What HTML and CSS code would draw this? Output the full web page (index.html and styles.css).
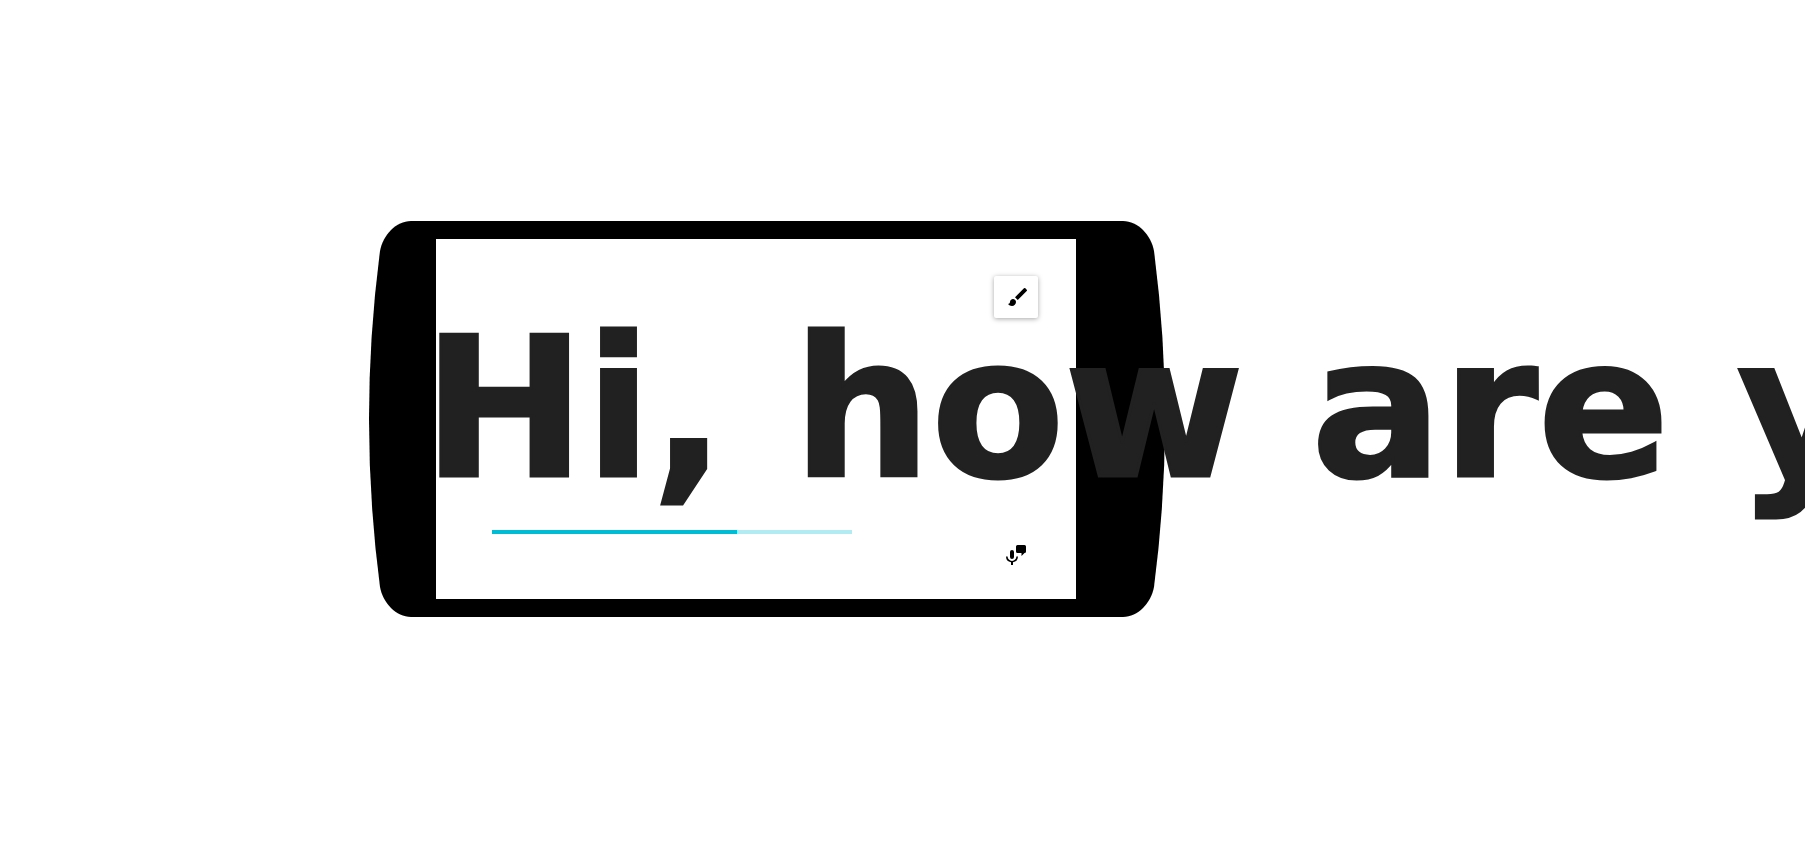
FILE: index.html
```html
<!DOCTYPE html>
<html lang="en">
<head>
<meta charset="utf-8">
<title>Phone preview</title>
<meta name="viewport" content="width=device-width, initial-scale=1">
<link rel="stylesheet" href="styles.css">
</head>
<body>
<main class="stage">
  <section class="phone">
    <svg class="shell" viewBox="0 0 796 396" preserveAspectRatio="none" aria-hidden="true">
      <path d="M42 0H754C769 0 782 14 785 30Q807 198 785 366C782 382 769 396 754 396H42C27 396 14 382 11 366Q-11 198 11 30C14 14 27 0 42 0Z"/>
    </svg>
    <div class="screen">
      <button class="tool tool-raised" type="button" aria-label="Style">
        <svg class="icon" viewBox="0 0 24 24" aria-hidden="true"><path d="M7 14c-1.660 0-3 1.340-3 3 0 1.310-1.160 2-2 2 .920 1.220 2.490 2 4 2 2.210 0 4-1.790 4-4 0-1.660-1.340-3-3-3zm13.710-9.370l-1.340-1.340a1 1 0 0 0-1.410 0L9 12.250 11.750 15l8.960-8.960a1 1 0 0 0 0-1.410z"/></svg>
      </button>
      <h1 class="message">Hi, how are you?</h1>
      <progress class="progress" value="245" max="360" aria-label="Progress"></progress>
      <button class="tool" type="button" aria-label="Speak">
        <svg class="icon" viewBox="0 0 24 24" aria-hidden="true"><path d="M8 7a2 2 0 0 1 2 2v5a2 2 0 0 1-4 0V9a2 2 0 0 1 2-2zM2 13.500h1.600a4.400 4.400 0 0 0 8.800 0H14a6 6 0 0 1-5 5.800V22H7v-2.700a6 6 0 0 1-5-5.800zM13.500 2h7A1.500 1.500 0 0 1 22 3.500v5a1.500 1.500 0 0 1-1.500 1.500L17.500 13v-3h-4A1.500 1.500 0 0 1 12 8.500v-5A1.500 1.500 0 0 1 13.500 2z"/></svg>
      </button>
    </div>
  </section>
</main>
</body>
</html>
```
FILE: styles.css
```css
body {
  margin: 0;
  overflow-x: hidden;
  background: #fff;
  color: #212121;
  font-family: "Arial Black", "DejaVu Sans", sans-serif;
}

.stage {
  padding: 221px 0 221px 369px;
}

.phone {
  position: relative;
  width: 640px;
  padding: 18px 89px 18px 67px;
}

.shell {
  position: absolute;
  inset: 0;
  width: 100%;
  height: 100%;
}

.screen {
  position: relative;
  display: grid;
  grid-template-columns: 360px 1fr;
  grid-template-rows: 79px 182px 76px;
  padding: 0 38px 23px 56px;
  background: #fff;
}

.tool {
  grid-column: 2;
  justify-self: end;
  align-self: end;
  display: grid;
  place-items: center;
  width: 44px;
  height: 42px;
  padding: 0;
  border: 0;
  border-radius: 2px;
  background: #fff;
  color: #000;
}

.tool-raised {
  padding-left: 4px;
  box-shadow: 0 1px 5px rgba(0, 0, 0, 0.35);
}

.icon {
  width: 24px;
  height: 24px;
  fill: currentColor;
}

.message {
  grid-column: 1 / -1;
  margin: 0 0 0 -69px;
  font-size: 194px;
  font-weight: 900;
  line-height: 182px;
  white-space: nowrap;
  -webkit-text-stroke: 3px currentColor;
}

.progress {
  grid-column: 1;
  appearance: none;
  width: 100%;
  height: 4px;
  margin-top: 30px;
  border: 0;
  background: #b2ebf2;
}

.progress::-webkit-progress-bar {
  background: #b2ebf2;
}

.progress::-webkit-progress-value {
  background: #00bcd4;
}
```
